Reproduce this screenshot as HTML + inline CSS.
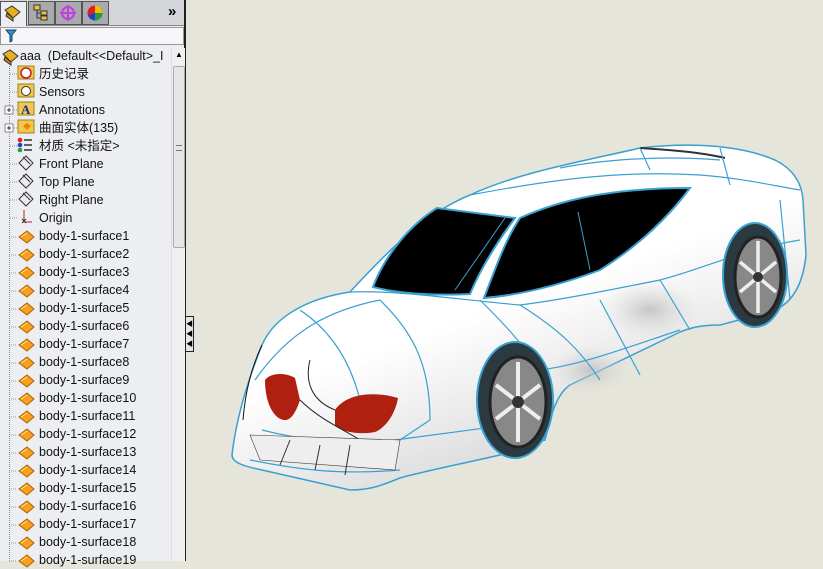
<!DOCTYPE html>
<html><head><meta charset="utf-8"><style>
*{margin:0;padding:0;box-sizing:border-box}
body{width:823px;height:561px;overflow:hidden;background:#e5e5db;font-family:"Liberation Sans","Noto Sans CJK SC",sans-serif;position:relative}
#panel{position:absolute;left:0;top:0;width:186px;height:561px;background:#eceef2;border-right:2px solid #222}
#tabs{height:26px;background:#d4d6da;border-bottom:1px solid #888;position:relative}
.tab{position:absolute;top:1px;width:27px;height:24px;background:#a8aaae;border:1px solid #555}
#filter{position:absolute;top:27px;left:0;width:184px;height:18px;background:#f7f7f9;border:1px solid #999}
.row{position:absolute;left:39px;font-size:12.5px;color:#111;white-space:nowrap;height:18px;line-height:18px}
#scroll{position:absolute;left:171px;top:48px;width:14px;height:513px;background:#f0f0f0;border-left:1px solid #ddd}
#thumb{position:absolute;left:1px;top:18px;width:12px;height:182px;background:#e6e6e6;border:1px solid #aaa;border-radius:2px}
.dot{position:absolute;left:9px;border-left:1px dotted #888}
</style></head><body>
<div id="panel">
<div id="tabs">
<div class="tab" style="left:0;background:#eceef2;border-bottom:none;height:25px"></div>
<svg style="position:absolute;left:3px;top:4px" width="20" height="18"><path d="M2 6 L9 2 L17 8 L10 14 Z" fill="#e8b020" stroke="#333"/><path d="M4 9 L10 14 L10 17 L3 12Z" fill="#c88a10" stroke="#333"/></svg>
<div class="tab" style="left:28px"></div>
<svg style="position:absolute;left:32px;top:4px" width="18" height="18"><rect x="2" y="1" width="6" height="5" fill="#ecc040" stroke="#333"/><rect x="9" y="7" width="6" height="4" fill="#ecc040" stroke="#333"/><rect x="9" y="12" width="6" height="4" fill="#ecc040" stroke="#333"/><path d="M5 6 V14 H9 M5 9 H9" stroke="#333" fill="none"/></svg>
<div class="tab" style="left:55px"></div>
<svg style="position:absolute;left:58px;top:4px" width="20" height="18"><circle cx="10" cy="9" r="6" fill="none" stroke="#c040e0" stroke-width="2"/><path d="M10 1V17M2 9H18" stroke="#c040e0" stroke-width="2"/></svg>
<div class="tab" style="left:82px"></div>
<svg style="position:absolute;left:85px;top:4px" width="20" height="18"><circle cx="10" cy="9" r="7.5" fill="#e02020"/><path d="M10 9 L10 1.5 A7.5 7.5 0 0 1 17.5 9Z" fill="#f0c000"/><path d="M10 9 L17.5 9 A7.5 7.5 0 0 1 10 16.5Z" fill="#20a040"/><path d="M10 9 L10 16.5 A7.5 7.5 0 0 1 3 11Z" fill="#2040d0"/></svg>
<div style="position:absolute;left:168px;top:3px;font-size:15px;font-weight:bold">»</div>
</div>
<div id="filter"><svg style="position:absolute;left:4px;top:1px" width="12" height="14"><path d="M1 1H11L7 6V12L5 13V6Z" fill="#3090d0" stroke="#104070"/></svg></div>
<svg style="position:absolute;left:1px;top:48px" width="20" height="18"><path d="M2 6 L9 2 L17 8 L10 14 Z" fill="#e8b020" stroke="#333"/><path d="M4 9 L10 14 L10 17 L3 12Z" fill="#c88a10" stroke="#333"/></svg>
<div class="row" style="left:20px;top:47px;">aaa &nbsp;(Default&lt;&lt;Default&gt;_I</div>
<div class="dot" style="top:66px;height:495px"></div>
<div id="scroll"><div style="font-size:8px;position:absolute;left:3px;top:2px">▲</div><div id="thumb"><div style="position:absolute;top:78px;left:2px;width:6px;height:6px;border-top:1px solid #777;border-bottom:1px solid #777"></div></div></div>
<div class="row" style="top:65px">历史记录</div>
<div class="row" style="top:83px">Sensors</div>
<div class="row" style="top:101px">Annotations</div>
<div class="row" style="top:119px">曲面实体(135)</div>
<div class="row" style="top:137px">材质 &lt;未指定&gt;</div>
<div class="row" style="top:155px">Front Plane</div>
<div class="row" style="top:173px">Top Plane</div>
<div class="row" style="top:191px">Right Plane</div>
<div class="row" style="top:209px">Origin</div>
<div class="row" style="top:227px">body-1-surface1</div>
<div class="row" style="top:245px">body-1-surface2</div>
<div class="row" style="top:263px">body-1-surface3</div>
<div class="row" style="top:281px">body-1-surface4</div>
<div class="row" style="top:299px">body-1-surface5</div>
<div class="row" style="top:317px">body-1-surface6</div>
<div class="row" style="top:335px">body-1-surface7</div>
<div class="row" style="top:353px">body-1-surface8</div>
<div class="row" style="top:371px">body-1-surface9</div>
<div class="row" style="top:389px">body-1-surface10</div>
<div class="row" style="top:407px">body-1-surface11</div>
<div class="row" style="top:425px">body-1-surface12</div>
<div class="row" style="top:443px">body-1-surface13</div>
<div class="row" style="top:461px">body-1-surface14</div>
<div class="row" style="top:479px">body-1-surface15</div>
<div class="row" style="top:497px">body-1-surface16</div>
<div class="row" style="top:515px">body-1-surface17</div>
<div class="row" style="top:533px">body-1-surface18</div>
<div class="row" style="top:551px">body-1-surface19</div>
<svg style="position:absolute;left:0;top:60px" width="40" height="501">
<g stroke="#999" stroke-dasharray="1 1"><path d="M10 14H17M10 32H17M10 50H17M10 68H17M10 86H17M10 104H17M10 122H17M10 140H17M10 158H17"/></g>
<rect x="5" y="46" width="8" height="8" fill="#fff" stroke="#888"/><path d="M7 50H11M9 48V52" stroke="#333"/>
<rect x="5" y="64" width="8" height="8" fill="#fff" stroke="#888"/><path d="M7 68H11M9 66V70" stroke="#333"/>
<rect x="18" y="6" width="16" height="13" fill="#f0c850" stroke="#a08020"/><circle cx="26" cy="13" r="5" fill="#fff" stroke="#c02020" stroke-width="1.5"/>
<rect x="18" y="24" width="16" height="13" fill="#f0c850" stroke="#a08020"/><circle cx="26" cy="31" r="4.5" fill="#fff" stroke="#333"/>
<rect x="18" y="42" width="16" height="13" fill="#f0c850" stroke="#a08020"/><text x="21" y="54" font-size="13" font-weight="bold" fill="#1030a0" font-family="Liberation Serif">A</text>
<rect x="18" y="60" width="16" height="13" fill="#f0c850" stroke="#a08020"/><path d="M23 66L27 63L31 66L27 70Z" fill="#f08000"/>
<circle cx="20" cy="80" r="2.3" fill="#e02020"/><circle cx="20" cy="85" r="2.3" fill="#2040d0"/><circle cx="20" cy="90" r="2.3" fill="#20a040"/><path d="M24 80H32M24 85H32M24 90H32" stroke="#333" stroke-width="1.5"/>
<g fill="none" stroke="#333"><path d="M26 96L33 103L26 110L19 103Z M23 97L30 104"/><path d="M26 114L33 121L26 128L19 121Z M23 115L30 122"/><path d="M26 132L33 139L26 146L19 139Z M23 133L30 140"/></g>
<path d="M24 150V162H32" stroke="#c02020" fill="none"/><path d="M22 159l4 4M26 159l-4 4" stroke="#333"/>
</svg>
<svg style="position:absolute;left:17px;top:229px" width="20" height="340">
<g id="s"><path d="M2 8L10 2L17 8L10 14Z" fill="#f8a020" stroke="#b06000"/><path d="M4 8L10 4" stroke="#ffe080"/></g>
<use href="#s" y="18"/><use href="#s" y="36"/><use href="#s" y="54"/><use href="#s" y="72"/><use href="#s" y="90"/><use href="#s" y="108"/><use href="#s" y="126"/><use href="#s" y="144"/><use href="#s" y="162"/><use href="#s" y="180"/><use href="#s" y="198"/><use href="#s" y="216"/><use href="#s" y="234"/><use href="#s" y="252"/><use href="#s" y="270"/><use href="#s" y="288"/><use href="#s" y="306"/><use href="#s" y="324"/>
</svg>
<svg style="position:absolute;left:0;top:229px" width="17" height="340"><path d="M9 8H17M9 26H17M9 44H17M9 62H17M9 80H17M9 98H17M9 116H17M9 134H17M9 152H17M9 170H17M9 188H17M9 206H17M9 224H17M9 242H17M9 260H17M9 278H17M9 296H17M9 314H17M9 332H17" stroke="#999" stroke-dasharray="1 1"/></svg>
</div>
<div style="position:absolute;left:186px;top:316px;width:8px;height:36px;background:#e4e6ea;border:1px solid #222;border-left:none;font-size:7px;line-height:10px;padding-top:3px">◀<br>◀<br>◀</div>
<svg style="position:absolute;left:0;top:0" width="823" height="561">
<defs><linearGradient id="g" x1="0" y1="0" x2="0.6" y2="1"><stop offset="0.55" stop-color="#fff"/><stop offset="1" stop-color="#d0d0d0"/></linearGradient>
<radialGradient id="sh" cx="0.5" cy="0.5" r="0.5"><stop offset="0" stop-color="#bbb" stop-opacity="0.8"/><stop offset="1" stop-color="#ddd" stop-opacity="0"/></radialGradient></defs>
<path d="M232 455 C236 420 248 380 262 345 C275 315 310 298 350 292 C375 265 420 215 470 195 C520 172 580 162 640 148 C690 142 740 145 775 160 C795 170 802 185 803 200 L806 255 C803 285 792 305 770 312 L720 325 C700 325 690 328 680 332 L570 385 C555 395 550 420 545 440 L500 455 C470 462 420 472 400 478 C380 486 370 490 350 490 L262 470 C242 466 232 462 232 455Z" fill="url(#g)" stroke="#3aa0d0" stroke-width="1.5"/>
<ellipse cx="650" cy="310" rx="50" ry="30" fill="url(#sh)"/>
<ellipse cx="590" cy="370" rx="40" ry="25" fill="url(#sh)"/>
<path d="M262 345 C250 370 245 395 243 420" stroke="#111" fill="none"/>
<path d="M640 148 C670 150 700 152 725 158" stroke="#333" stroke-width="2" fill="none"/>
<path d="M373 287 C385 255 410 225 437 208 L515 218 C495 245 480 270 470 294 C430 296 395 293 373 287Z" fill="#000" stroke="#3aa0d0" stroke-width="2"/>
<path d="M520 218 C560 200 610 188 690 188 C670 215 640 245 600 270 C560 285 520 295 484 298 C495 270 505 240 520 218Z" fill="#000" stroke="#3aa0d0" stroke-width="2"/>
<path d="M578 212 L590 270 M455 290 L505 218" stroke="#3aa0d0" fill="none"/>
<g fill="none" stroke="#3aa0d0" stroke-width="1.2">
<path d="M350 292 C400 290 460 300 520 305 C560 300 610 290 660 280 C700 270 740 250 800 240"/>
<path d="M300 310 C330 330 350 360 360 400 M255 380 C290 330 330 310 380 300 M380 300 C410 330 430 360 430 420 M430 420 L400 440"/>
<path d="M480 300 C500 320 520 340 540 370 M520 305 C560 330 580 350 600 380 M600 300 L640 375 M660 280 L690 330 M740 250 L760 310 M780 200 L790 300"/>
<path d="M262 430 C300 440 350 445 395 440 L545 420 M250 460 C300 470 340 475 400 470 M540 370 C580 365 620 350 680 330"/>
<path d="M470 195 C550 180 620 170 700 175 C740 178 770 185 800 190 M560 168 C600 160 660 155 720 160 M640 148 L650 170 M720 148 L730 185"/>
</g>
<path d="M265 380 C270 373 285 372 295 378 L300 400 C295 415 290 420 285 420 C275 420 265 405 265 380Z" fill="#b02010"/>
<path d="M335 410 C345 395 370 390 398 398 C395 415 385 428 375 432 C360 435 340 432 335 425Z" fill="#b02010"/>
<path d="M310 360 C305 380 310 400 335 410 M300 400 C320 420 345 430 360 440" stroke="#222" fill="none"/>
<path d="M250 435 L400 440 L395 470 L260 460Z" fill="#eee" stroke="#333" stroke-width="0.6"/>
<path d="M290 440 L280 465 M320 445 L315 470 M350 445 L345 475" stroke="#333"/>
<ellipse cx="515" cy="400" rx="38" ry="58" fill="#2a3a40" stroke="#3aa0d0" stroke-width="2"/>
<ellipse cx="518" cy="402" rx="28" ry="45" fill="#888" stroke="#222" stroke-width="3"/>
<g stroke="#eee" stroke-width="4"><path d="M518 362V442M496 385L540 419M496 419L540 385"/></g>
<circle cx="518" cy="402" r="6" fill="#333"/>
<ellipse cx="755" cy="275" rx="32" ry="52" fill="#2a3a40" stroke="#3aa0d0" stroke-width="2"/>
<ellipse cx="758" cy="277" rx="23" ry="40" fill="#888" stroke="#222" stroke-width="3"/>
<g stroke="#eee" stroke-width="3.5"><path d="M758 241V313M740 262L776 292M740 292L776 262"/></g>
<circle cx="758" cy="277" r="5" fill="#333"/>
</svg>
</body></html>
